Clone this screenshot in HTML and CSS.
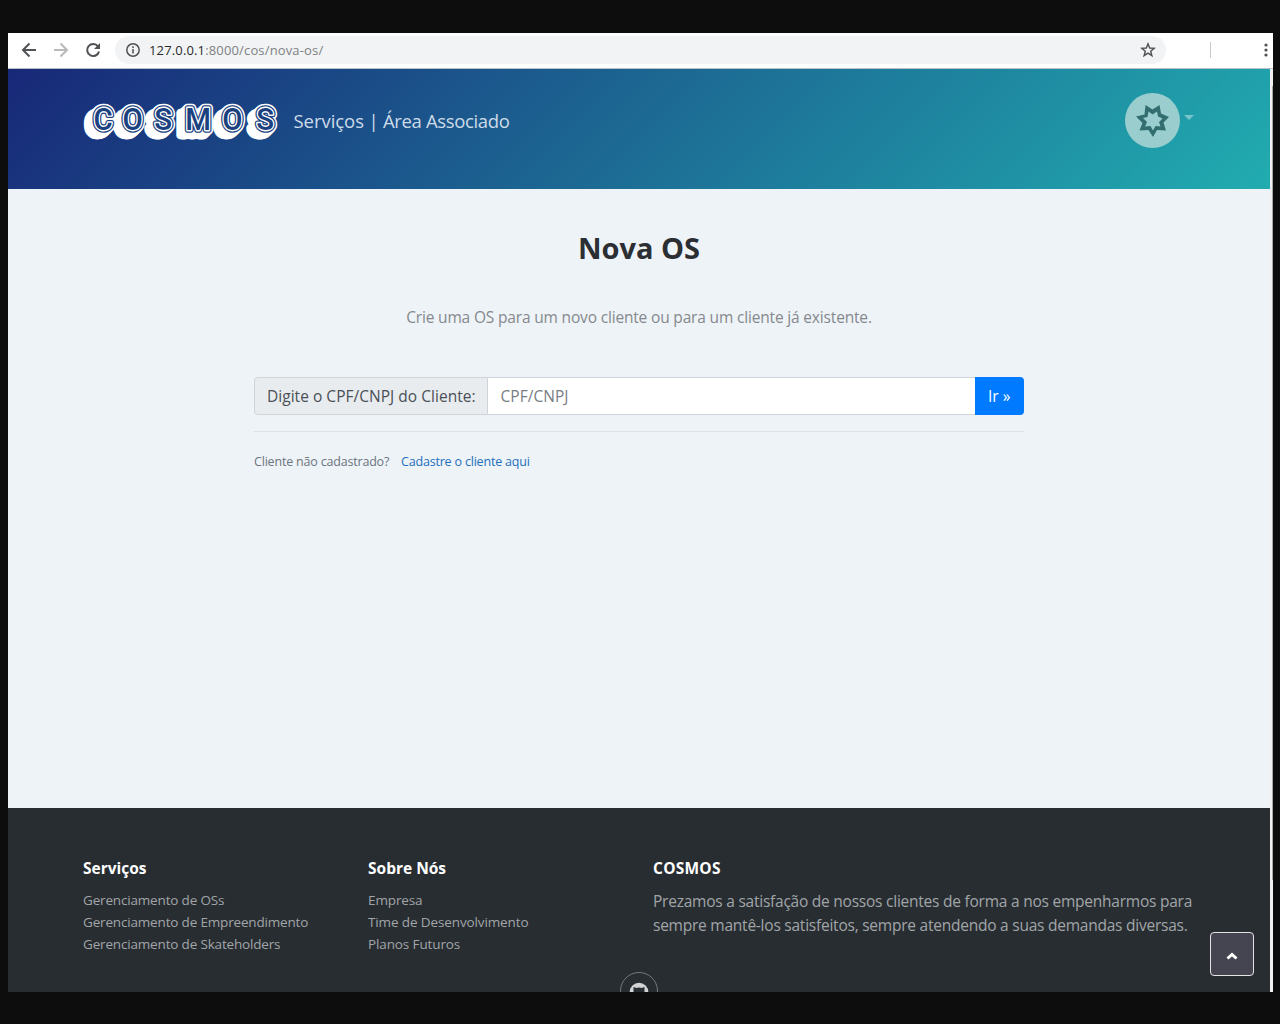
FILE: index.html
```html
<!DOCTYPE html>
<html lang="pt-br">
<head>
<meta charset="utf-8">
<title>Nova OS</title>
<link rel="stylesheet" href="styles.css">
</head>
<body>
<div class="window">
  <div class="toolbar">
    <svg class="nav-icons" width="100" height="35" viewBox="0 0 100 35" fill="none" stroke="#505255" stroke-width="2">
      <path d="M28 17H15M21.500 10.500L15 17L21.500 23.500"/>
      <path d="M46 17H59M52.500 10.500L59 17L52.500 23.500" stroke="#b9babb"/>
      <path d="M90 13.500A6 6 0 1 0 91 18.500"/><path d="M92 10V16H86Z" fill="#505255" stroke="none"/>
    </svg>
    <div class="address">
      <svg width="14" height="14" viewBox="0 0 14 14" fill="none" stroke="#505255" stroke-width="1.500"><circle cx="7" cy="7" r="6.200"/><path d="M7 6V10.500M7 3.300V4.900"/></svg>
      <span class="url"><b>127.0.0.1</b>:8000/cos/nova-os/</span>
      <svg class="star" width="16" height="16" viewBox="0 0 16 16" fill="none" stroke="#505255" stroke-width="1.400"><path d="M8 1.800L9.700 6L14.200 6.300L10.700 9.200L11.900 13.700L8 11.200L4.100 13.700L5.300 9.200L1.800 6.300L6.300 6Z"/></svg>
    </div>
    <span class="divider"></span>
    <svg class="dots" width="4" height="14" viewBox="0 0 4 14" fill="#505255"><circle cx="2" cy="2" r="1.600"/><circle cx="2" cy="7" r="1.600"/><circle cx="2" cy="12" r="1.600"/></svg>
  </div>
  <div class="viewport">
    <div class="page">
      <header class="header">
        <svg class="logo" width="198" height="44" viewBox="0 0 198 44">
          <defs><text id="word" class="word" transform="scale(.95 1)" y="30" x="12.200 42.700 76 108.800 147.600 183.500">COSMOS</text></defs>
          <g fill="#fff" stroke="#fff" stroke-width="8.600" stroke-linejoin="round">
            <use href="#word" x="-7" y="5.500"/><use href="#word" x="-6" y="5.500"/><use href="#word" x="-5" y="5"/><use href="#word" x="-4" y="4"/><use href="#word" x="-3" y="3"/><use href="#word" x="-2" y="2"/><use href="#word" x="-1" y="1"/>
            <use href="#word"/>
          </g>
          <g fill="#1b427f" stroke-linejoin="round">
            <use href="#word" stroke="#1b427f" stroke-width="5.400"/>
            <use href="#word" stroke="#fff" stroke-width="2.800"/>
            <use href="#word"/>
          </g>
        </svg>
        <nav class="menu"><span class="m1">Serviços</span><span class="bar">|</span><span class="m2">Área Associado</span></nav>
        <div class="user">
          <svg width="55" height="55" viewBox="0 0 55 55"><circle cx="27.500" cy="27.500" r="27.500" fill="#9acdce"/><path d="M20.500 12L27.500 16.500L34.500 12L36 20.500L44 24L38.500 29.500L41 37.500L32 37L28 44L23.500 37L14.500 37.500L17.500 30L11 23.500L19.500 21.500Z" fill="#326d70"/><path d="M23.500 18.500L27.500 21.500L32 18.500L33 23.500L37.500 25.500L34 29L35.500 33.500L30.500 33L28 37.500L25.500 33L20 33.500L22 29L18 25L22.500 24Z" fill="#9acdce"/></svg>
          <span class="caret"></span>
        </div>
      </header>
      <main class="main">
        <h1>Nova OS</h1>
        <p class="lead">Crie uma OS para um novo cliente ou para um cliente já existente.</p>
        <div class="form">
          <div class="group">
            <label class="label"><span>Digite o CPF/CNPJ do Cliente:</span></label>
            <div class="field"><span>CPF/CNPJ</span></div>
            <div class="go"><span>Ir »</span></div>
          </div>
          <div class="hint"><span class="q">Cliente não cadastrado?</span><a class="link">Cadastre o cliente aqui</a></div>
        </div>
      </main>
      <footer class="footer">
        <div class="columns">
          <section><h2>Serviços</h2><ul><li>Gerenciamento de OSs</li><li>Gerenciamento de Empreendimento</li><li>Gerenciamento de Skateholders</li></ul></section>
          <section><h2>Sobre Nós</h2><ul class="about-links"><li>Empresa</li><li>Time de Desenvolvimento</li><li>Planos Futuros</li></ul></section>
          <section><h2 class="brand">COSMOS</h2><p class="about">Prezamos a satisfação de nossos clientes de forma a nos empenharmos para<br>sempre mantê-los satisfeitos, sempre atendendo a suas demandas diversas.</p></section>
        </div>
        <svg class="github" width="38" height="38" viewBox="0 0 38 38"><circle cx="19" cy="19" r="18.500" fill="none" stroke="#74797c"/><circle cx="19" cy="20" r="9.300" fill="#d0d2d3"/><path d="M13.500 15L16.500 16Q19 15.200 21.500 16L24.500 15V24H13.500Z" fill="#282d32"/></svg>
      </footer>
      <div class="top"><svg width="12" height="8" viewBox="0 0 12 8" fill="none" stroke="#fff" stroke-width="3"><path d="M1.500 6.500L6 2.500L10.500 6.500"/></svg></div>
    </div>
    <div class="scrollbar"><span></span></div>
  </div>
</div>
</body>
</html>
```
FILE: styles.css
```css
* { box-sizing: border-box; }
body { margin: 0; height: 1024px; overflow: hidden; background: #0d0d0d; padding: 33px 7px 32px 8px; font-family: "Open Sans", "Noto Sans", sans-serif; white-space: nowrap; }
h1, h2, p, ul { margin: 0; padding: 0; }
ul { list-style: none; }
.window { height: 959px; overflow: hidden; background: #fff; }
.toolbar { height: 36px; display: flex; align-items: center; padding-bottom: 1px; border-bottom: 1px solid #b9c3c7; }
.address { margin-left: 7px; width: 1051px; height: 28px; border-radius: 14px; background: #f1f3f4; display: flex; align-items: center; padding: 0 10px 0 11px; }
.url { margin-left: 9px; font-size: 13px; color: #7e8184; letter-spacing: .15px; }
.url b { font-weight: 400; color: #292a2d; }
.star { margin-left: auto; }
.divider { width: 1px; height: 16px; margin-left: 44px; background: #c8c9ca; }
.dots { margin-left: 53px; }
.viewport { display: flex; height: 923px; }
.page { width: 1262px; position: relative; display: flex; flex-direction: column; }
.scrollbar { width: 3px; background: #f1f1f1; padding: 17px 0 0 2px; }
.scrollbar span { display: block; height: 794px; background: #a9a9a9; }
.header { height: 120px; display: flex; align-items: flex-start; padding-left: 74px; background: linear-gradient(135deg, #182878, #21acb0); }
.logo { margin-top: 31px; overflow: visible; }
.word { font: 500 31px Roboto, sans-serif; }
.menu { display: flex; margin: 39px 0 0 13.500px; line-height: 26px; font-size: 18.500px; color: #cddbe9; }
.m1 { width: 71px; letter-spacing: -.05px; }
.bar { width: 18.500px; padding-left: 4px; }
.m2 { letter-spacing: -.35px; }
.user { display: flex; margin: 24px 76px 0 auto; }
.caret { width: 10px; height: 5px; margin: 22px 0 0 4px; background: #75c5ca; clip-path: polygon(0 0, 100% 0, 50% 100%); }
.main { height: 619px; background: #eef3f8; text-align: center; }
h1 { margin-top: 39px; line-height: 40px; font-size: 29px; color: #2b2f33; }
.lead { margin-top: 37px; line-height: 24px; font-size: 15.500px; letter-spacing: -.17px; color: #85898d; }
.form { width: 770px; margin: 48px 0 0 246px; text-align: left; }
.group { height: 38px; display: flex; line-height: 36px; font-size: 15.500px; letter-spacing: .03px; color: #495057; }
.label { width: 234px; padding-left: 12px; border: 1px solid #ced4da; border-radius: 4px 0 0 4px; background: #e9ecef; }
.field { flex: 1; padding-left: 12.500px; border: 1px solid #ced4da; border-width: 1px 0; background: #fff; color: #777d83; }
.go { width: 49px; padding: 1px 0 0 13px; background: #007bff; color: #fff; border-radius: 0 4px 4px 0; }
.hint { margin-top: 16px; padding-top: 20px; border-top: 1px solid #dce1e5; line-height: 20px; font-size: 12.500px; letter-spacing: -.19px; color: #6c757d; display: flex; }
.q { width: 147px; }
.link { color: #1c70bd; }
.footer { height: 184px; overflow: hidden; background: #282d32; padding: 48px 0 0 75px; }
.columns { display: grid; grid-template-columns: 285px 285px 1fr; height: 116px; }
h2 { line-height: 24px; font-size: 15.500px; color: #fff; }
.brand { letter-spacing: .25px; }
li { line-height: 22px; font-size: 13.500px; letter-spacing: -.17px; color: #a1a5a8; }
.about-links li { letter-spacing: -.12px; }
ul { margin-top: 9px; }
.about { margin-top: 9px; line-height: 24px; font-size: 15.500px; letter-spacing: -.235px; color: #a1a5a8; }
.github { display: block; margin-left: 537px; }
.top { position: absolute; right: 16px; bottom: 16px; width: 44px; height: 44px; border: 1px solid #e4e4e7; border-radius: 4px; background: #444551; display: grid; place-items: center; padding-top: 4px; }
```
